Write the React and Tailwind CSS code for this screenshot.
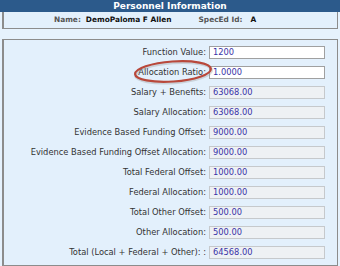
import React from "react";

const rows = [
  { label: "Function Value:", value: "1200", editable: true },
  { label: "Allocation Ratio:", value: "1.0000", editable: true },
  { label: "Salary + Benefits:", value: "63068.00" },
  { label: "Salary Allocation:", value: "63068.00" },
  { label: "Evidence Based Funding Offset:", value: "9000.00" },
  { label: "Evidence Based Funding Offset Allocation:", value: "9000.00" },
  { label: "Total Federal Offset:", value: "1000.00" },
  { label: "Federal Allocation:", value: "1000.00" },
  { label: "Total Other Offset:", value: "500.00" },
  { label: "Other Allocation:", value: "500.00" },
  { label: "Total (Local + Federal + Other): :", value: "64568.00" },
];

export default function App() {
  return (
    <div
      className="relative w-[340px] h-[266px] overflow-hidden bg-[#e6f2fd]"
      style={{ fontFamily: '"DejaVu Sans", Verdana, sans-serif' }}
    >
      <div className="h-[12px] bg-[#2c5a8b] flex items-center justify-center text-white font-bold text-[9px] leading-none">
        Personnel Information
      </div>
      <div className="mx-[2px] h-[17px] bg-[#e3f0fc] border-l-2 border-r border-b border-[#8c8c8c] flex items-center text-[7.4px] leading-none font-bold">
        <span className="ml-[50px] text-[#555]">Name:</span>
        <span className="ml-[5px] text-[#111]">DemoPaloma F Allen</span>
        <span className="ml-[27px] text-[#555]">SpecEd Id:</span>
        <span className="ml-[8px] text-[#111]">A</span>
      </div>
      <div className="mx-[2px] mt-[10px] h-[227px] bg-[#e3f0fc] border-l-2 border-t border-r border-b border-[#8c8c8c] pt-[6px] flex flex-col gap-[7px]">
        {rows.map((r) => (
          <div key={r.label} className="flex items-center h-[13px]">
            <div className="w-[204px] text-right text-[8.3px] text-[#333] leading-none pr-[2px]">
              {r.label}
            </div>
            <div
              className={
                r.editable
                  ? "ml-[1px] w-[116px] h-[13px] bg-white border border-[#a0a0a0] flex items-center pl-[3px] text-[8.3px] text-[#3a34a8] leading-none"
                  : "ml-[1px] w-[116px] h-[13px] bg-[#eef1f4] border border-[#c6c9cc] flex items-center pl-[3px] text-[8.3px] text-[#3a34a8] leading-none"
              }
            >
              {r.value}
            </div>
          </div>
        ))}
      </div>
      <svg
        className="absolute left-0 top-0 pointer-events-none"
        width="340"
        height="266"
      >
        <ellipse
          cx="173.5"
          cy="72.5"
          rx="38"
          ry="10"
          transform="rotate(-4 173.5 72.5)"
          fill="none"
          stroke="#9a9a9a"
          strokeOpacity="0.35"
          strokeWidth="3.5"
        />
        <ellipse
          cx="173"
          cy="71.5"
          rx="38"
          ry="10"
          transform="rotate(-4 173 71.5)"
          fill="none"
          stroke="#b9483b"
          strokeWidth="2.2"
        />
      </svg>
    </div>
  );
}
